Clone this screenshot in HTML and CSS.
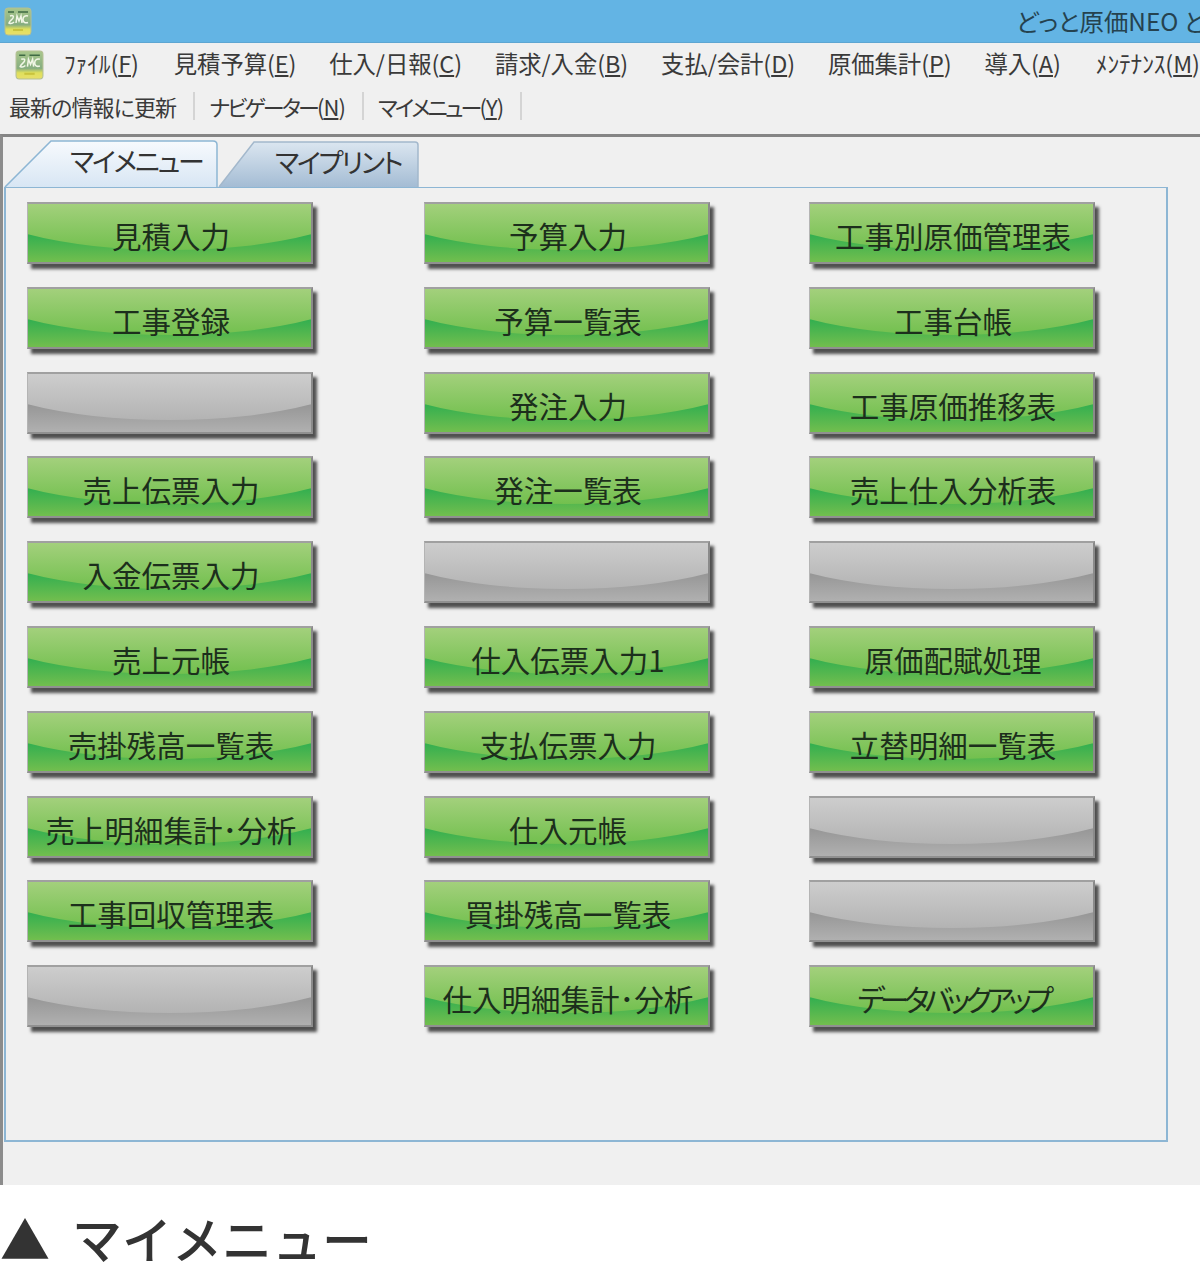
FILE: index.html
```html
<!DOCTYPE html>
<html lang="ja">
<head>
<meta charset="utf-8">
<title>マイメニュー</title>
<link rel="stylesheet" href="styles.css">
</head>
<body>
<div class="app">
  <header class="titlebar">
    <svg class="logo logo-title" viewBox="0 0 28 29"><use href="#applogo"/></svg>
    <span class="title-text">どっと原価NEO どっと原価NEO</span>
  </header>
  <nav class="menubar">
    <svg class="logo logo-menu" viewBox="0 0 28 29">
      <defs>
        <linearGradient id="lg" x1="0" y1="0" x2="0" y2="1">
          <stop offset="0" stop-color="#a9c78c"/><stop offset=".62" stop-color="#86ad80"/><stop offset=".78" stop-color="#dfe05c"/><stop offset="1" stop-color="#e8de6a"/>
        </linearGradient>
        <symbol id="applogo" viewBox="0 0 28 29">
          <rect x="1" y="1" width="26" height="27" rx="3" fill="url(#lg)" stroke="#b3bf92"/>
          <path d="M4 5h6M14 5h10" stroke="#3f6a44" stroke-width="1.4"/>
          <path d="M6 9c3-1 4 0 3 2s-3 2-4 5c2 1 4 0 5-1M12 16l1-7 2 5 2-5 1 7M24 9c-3-1-5 1-5 3.500s2 4 5 3" fill="none" stroke="#f1f6e6" stroke-width="1.5"/>
          <path d="M9 23h10" stroke="#c9c33d" stroke-width="2"/>
        </symbol>
      </defs>
      <use href="#applogo"/>
    </svg>
    <span class="menu-item m-file">ﾌｧｲﾙ(<u>F</u>)</span>
    <span class="menu-item m-wide">見積予算(<u>E</u>)</span>
    <span class="menu-item">仕入/日報(<u>C</u>)</span>
    <span class="menu-item">請求/入金(<u>B</u>)</span>
    <span class="menu-item">支払/会計(<u>D</u>)</span>
    <span class="menu-item">原価集計(<u>P</u>)</span>
    <span class="menu-item">導入(<u>A</u>)</span>
    <span class="menu-item m-wide">ﾒﾝﾃﾅﾝｽ(<u>M</u>)</span>
  </nav>
  <div class="toolbar">
    <span class="tool">最新の情報に更新</span>
    <span class="tool tool-kana">ナビゲーター<span class="tool-key">(<u>N</u>)</span></span>
    <span class="tool tool-kana">マイメニュー<span class="tool-key">(<u>Y</u>)</span></span>
  </div>
  <main class="workspace">
    <div class="tabs">
      <div class="tab tab-active">
        <svg class="tab-shape" viewBox="0 0 214 48" preserveAspectRatio="none">
          <defs>
            <linearGradient id="ta" x1="0" y1="0" x2="0" y2="1"><stop offset="0" stop-color="#f7fafd"/><stop offset="1" stop-color="#d8e6f4"/></linearGradient>
            <linearGradient id="ti" x1="0" y1="0" x2="0" y2="1"><stop offset="0" stop-color="#dbe6f0"/><stop offset="1" stop-color="#a4bcd4"/></linearGradient>
          </defs>
          <path d="M1 48 L47 1 H209 Q213 1 213 5 V48" fill="url(#ta)" stroke="#8db6d4" stroke-width="1.5"/>
        </svg>
        <span class="tab-label">マイメニュー</span>
      </div>
      <div class="tab tab-idle">
        <svg class="tab-shape" viewBox="0 0 201 47" preserveAspectRatio="none">
          <path d="M1 47 L36 1 H197 Q200 1 200 4 V47" fill="url(#ti)" stroke="#a3b8cc" stroke-width="1.5"/>
        </svg>
        <span class="tab-label">マイプリント</span>
      </div>
    </div>
    <section class="panel">
      <div class="grid">
        <button class="btn">見積入力</button><button class="btn">予算入力</button><button class="btn">工事別原価管理表</button>
        <button class="btn">工事登録</button><button class="btn">予算一覧表</button><button class="btn">工事台帳</button>
        <button class="btn off"></button><button class="btn">発注入力</button><button class="btn">工事原価推移表</button>
        <button class="btn">売上伝票入力</button><button class="btn">発注一覧表</button><button class="btn">売上仕入分析表</button>
        <button class="btn">入金伝票入力</button><button class="btn off"></button><button class="btn off"></button>
        <button class="btn">売上元帳</button><button class="btn">仕入伝票入力1</button><button class="btn">原価配賦処理</button>
        <button class="btn">売掛残高一覧表</button><button class="btn">支払伝票入力</button><button class="btn">立替明細一覧表</button>
        <button class="btn">売上明細集計･分析</button><button class="btn">仕入元帳</button><button class="btn off"></button>
        <button class="btn">工事回収管理表</button><button class="btn">買掛残高一覧表</button><button class="btn off"></button>
        <button class="btn off"></button><button class="btn">仕入明細集計･分析</button><button class="btn btn-narrow">データバックアップ</button>
      </div>
    </section>
  </main>
</div>
<p class="caption"><span class="caption-mark">▲</span><span>マイメニュー</span></p>
</body>
</html>
```
FILE: styles.css
```css
* { box-sizing: border-box; }
html, body { margin: 0; height: 1263px; overflow: hidden; background: #fff; }
body { font-family: "Noto Sans CJK JP", "Noto Sans", sans-serif; font-feature-settings: "palt"; color: #333; }
.app { height: 1185px; background: #f0f0f0; display: flex; flex-direction: column; overflow: hidden; }
.titlebar { height: 43px; flex: none; background: #63b4e4; border-bottom: 1px solid #5da6d2; display: flex; align-items: center; padding-left: 4px; }
.logo { flex: none; display: block; filter: blur(.5px); }
.logo-title { width: 28px; height: 29px; }
.logo-menu { width: 29px; height: 30px; }
.title-text { margin-left: auto; width: 184px; overflow: hidden; white-space: nowrap; font-size: 24.4px; line-height: 42px; color: #25424f; }
.menubar { height: 44px; flex: none; display: flex; align-items: center; padding: 0 0 0 15px; white-space: nowrap; font-size: 23.4px; letter-spacing: -0.1px; color: #3a3a3a; }
.menu-item { margin-left: 33px; margin-bottom: 4px; line-height: 42px; }
.m-file { margin-left: 20px; }
.m-wide { margin-left: 35px; }
.toolbar { height: 47px; flex: none; display: flex; align-items: center; padding: 0 0 10px 9px; font-size: 22px; letter-spacing: -0.9px; color: #3a3a3a; white-space: nowrap; }
.tool { line-height: 28px; padding-right: 17px; margin-right: 14px; border-right: 2px solid #d4d4d4; }
.tool-kana { letter-spacing: -2.9px; }
.tool-key { letter-spacing: -0.9px; }
.workspace { flex: 1; border-top: 3px solid #858585; border-left: 3px solid #8c8c8c; padding: 3px 32px 0 1px; display: flex; flex-direction: column; }
.tabs { display: flex; height: 47px; flex: none; }
.tab { position: relative; display: flex; align-items: center; padding-bottom: 6px; font-size: 27px; letter-spacing: -2.2px; color: #333; white-space: nowrap; }
.tab-active { width: 214px; padding-left: 66px; }
.tab-idle { width: 201px; margin-top: 1px; padding-left: 57px; }
.tab-shape { position: absolute; left: 0; top: 0; width: 100%; height: 100%; }
.tab-label { position: relative; }
.panel { width: 1164px; height: 955px; border: 2px solid #8db6d4; border-top-width: 1.5px; padding: 14px 0 0 21px; background: #f0f0f0; }
.grid { display: grid; grid-template-columns: 397px 385px 286px; grid-template-rows: repeat(10, 62px); row-gap: 22.8px; justify-content: start; }
.btn { position: relative; isolation: isolate; overflow: hidden; width: 286px; height: 62px; padding: 4px 0 0 3px; font: inherit; font-size: 29.5px; color: #1c2f1c; white-space: nowrap; border-style: solid; border-width: 2px 2px 2px 1px; border-color: #a0a0a0 #8a8a8a #909090 #b4b4b4; background: linear-gradient(#2fae50 50%, #72be4e 100%); box-shadow: 4px 5px 3px #505050; }
.btn::before { content: ""; position: absolute; z-index: -1; left: -20%; top: -60px; width: 140%; height: 106px; border-radius: 50%; background: linear-gradient(#a3d07c 60px, #72c04e 106px); }
.btn.off { background: linear-gradient(#959595 50%, #b0b0b0 100%); }
.btn.off::before { background: linear-gradient(#cdcdcd 60px, #b3b3b3 106px); }
.btn-narrow { letter-spacing: -5.2px; }
.caption { margin: 0; height: 78px; display: flex; align-items: center; padding: 26px 0 0 0; font-size: 50px; font-weight: 500; font-feature-settings: normal; color: #333; line-height: 48px; white-space: nowrap; }
.caption-mark { width: 72px; flex: none; }
```
